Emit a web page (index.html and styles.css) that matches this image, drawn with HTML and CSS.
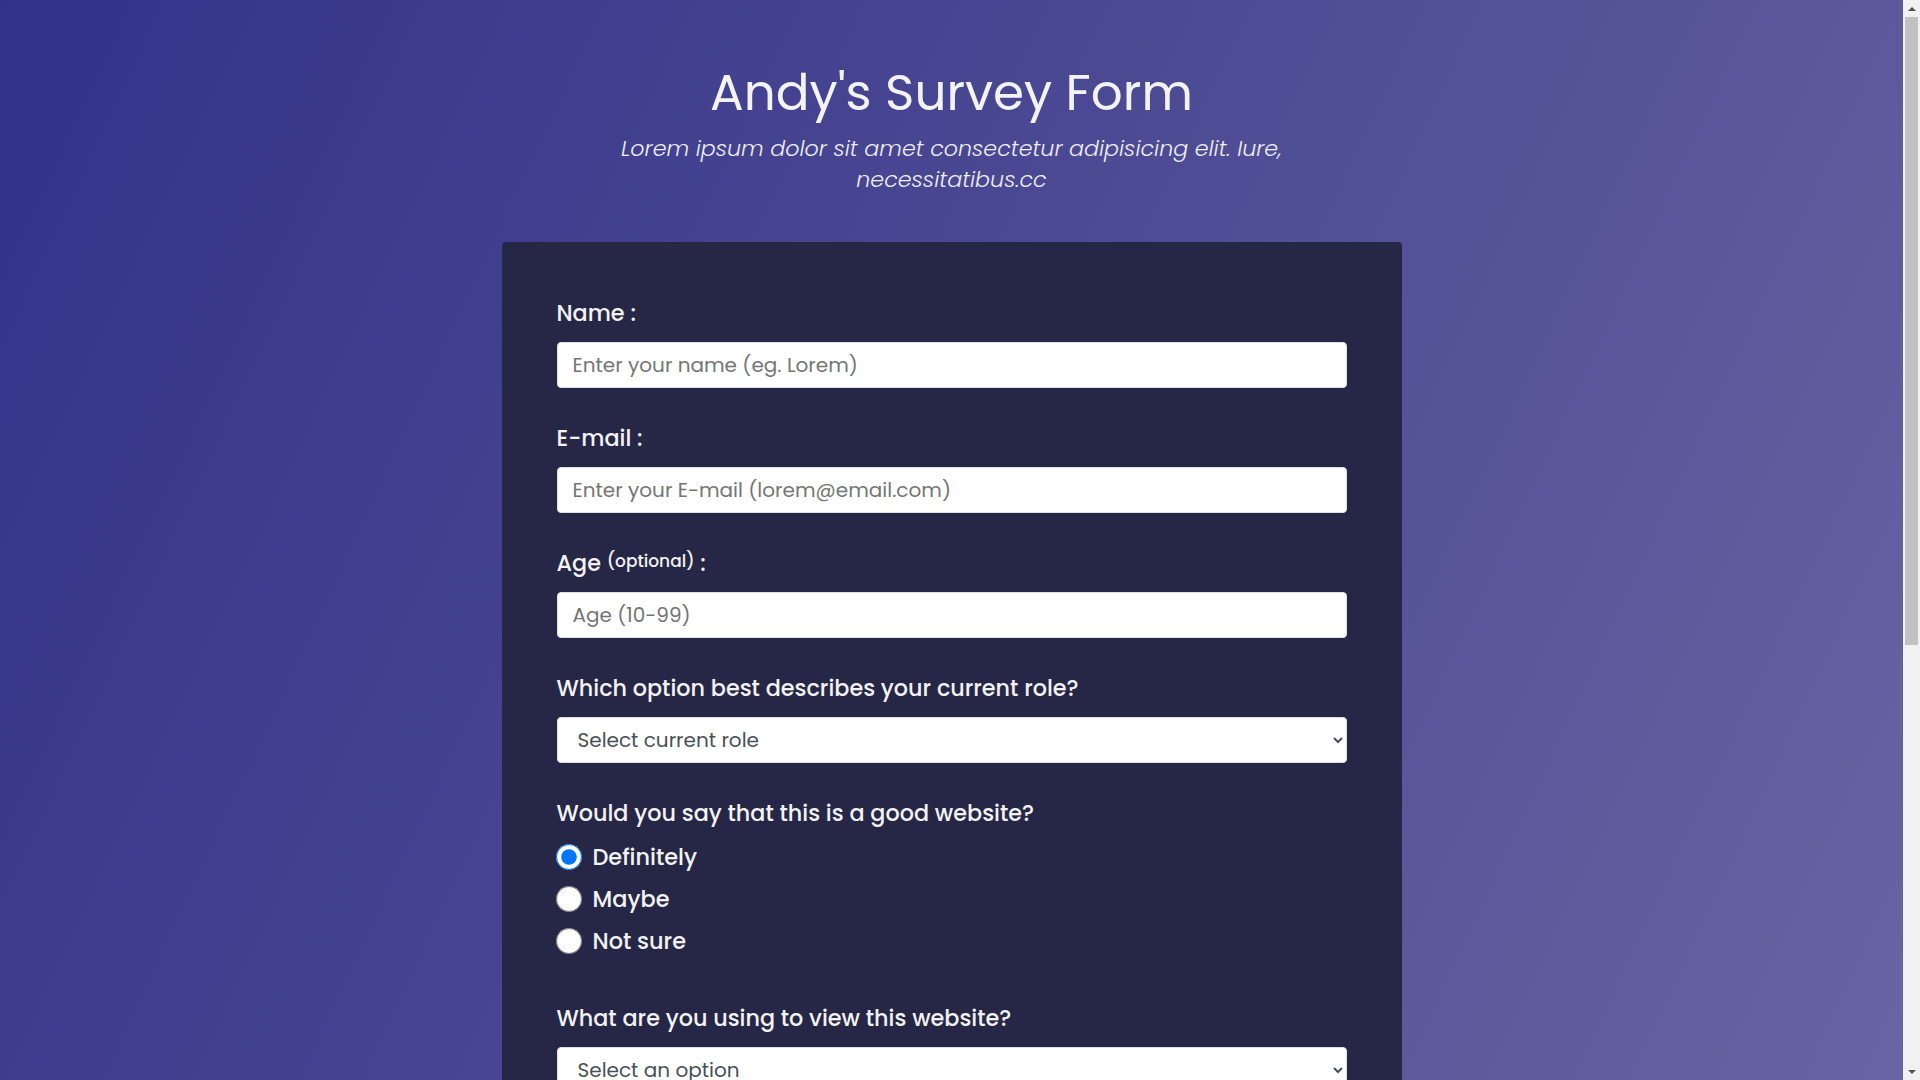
FILE: index.html
```html
<!DOCTYPE html>
<html lang="en">
<head>
<meta charset="UTF-8">
<title>Andy's Survey Form</title>
<link rel="stylesheet" href="styles.css">
</head>
<body>
<header class="header">
  <h1 class="title" id="title">Andy's Survey Form</h1>
  <p class="description" id="description">Lorem ipsum dolor sit amet consectetur adipisicing elit. Iure, necessitatibus.cc</p>
</header>
<main class="card">
  <form id="survey-form" class="form">
    <div class="group">
      <label class="label" for="name">Name :</label>
      <input class="field" id="name" type="text" placeholder="Enter your name (eg. Lorem)">
    </div>
    <div class="group">
      <label class="label" for="email">E-mail :</label>
      <input class="field" id="email" type="email" placeholder="Enter your E-mail (lorem@email.com)">
    </div>
    <div class="group">
      <label class="label" for="number">Age <span class="small">(optional)</span> :</label>
      <input class="field" id="number" type="number" placeholder="Age (10-99)">
    </div>
    <div class="group">
      <label class="label" for="role">Which option best describes your current role?</label>
      <select class="field select" id="role">
        <option>Select current role</option>
        <option>Student</option>
        <option>Full Time Job</option>
        <option>Prefer not to say</option>
      </select>
    </div>
    <div class="group group-radio">
      <p class="label">Would you say that this is a good website?</p>
      <label class="choice"><input class="radio" type="radio" name="good" checked> Definitely</label>
      <label class="choice"><input class="radio" type="radio" name="good"> Maybe</label>
      <label class="choice"><input class="radio" type="radio" name="good"> Not sure</label>
    </div>
    <div class="group">
      <label class="label" for="device">What are you using to view this website?</label>
      <select class="field select" id="device">
        <option>Select an option</option>
        <option>Desktop</option>
        <option>Laptop</option>
        <option>Phone</option>
      </select>
    </div>
    <div class="group group-radio">
      <p class="label">What would you like to see improved? <span class="small">(Check all that apply)</span></p>
      <label class="choice"><input class="check" type="checkbox"> Front-end Projects</label>
      <label class="choice"><input class="check" type="checkbox"> Back-end Projects</label>
      <label class="choice"><input class="check" type="checkbox"> Data Visualization</label>
      <label class="choice"><input class="check" type="checkbox"> Challenges</label>
      <label class="choice"><input class="check" type="checkbox"> Open Source Community</label>
    </div>
    <div class="group">
      <label class="label" for="comments">Any comments or suggestions?</label>
      <textarea class="field textarea" id="comments" placeholder="Enter your comment here..."></textarea>
    </div>
    <button class="submit" id="submit" type="submit">Submit</button>
  </form>
</main>
<div class="scrollbar" aria-hidden="true">
  <span class="scroll-arrow scroll-up"></span>
  <span class="scroll-track"><span class="scroll-thumb"></span></span>
  <span class="scroll-arrow scroll-down"></span>
</div>
</body>
</html>
```
FILE: styles.css
```css
html {
  min-height: 100%;
  background: linear-gradient(115deg, #32328a 0%, #4a4892 45%, #6765a2 100%) fixed;
}

body {
  margin: 0 17px 0 0;
  font-family: "Poppins", "Open Sans", "DejaVu Sans", sans-serif;
  color: #f3f3f3;
}

.scrollbar {
  position: fixed;
  top: 0;
  right: 0;
  width: 17px;
  height: 100vh;
  display: flex;
  flex-direction: column;
  background: #f1f1f1;
}

.scroll-arrow {
  flex: none;
  height: 17px;
  display: flex;
  align-items: center;
  justify-content: center;
}

.scroll-up::before,
.scroll-down::before {
  content: "";
  width: 0;
  height: 0;
  border-left: 4px solid transparent;
  border-right: 4px solid transparent;
}

.scroll-up::before {
  border-bottom: 4px solid #505050;
}

.scroll-down::before {
  border-top: 4px solid #505050;
}

.scroll-track {
  flex: 1;
  padding: 0 2px;
}

.scroll-thumb {
  display: block;
  height: 628px;
  background: #c1c1c1;
}

.header {
  text-align: center;
  padding-top: 62px;
  padding-bottom: 47px;
}

.title {
  margin: 0 0 9px;
  font-size: 50px;
  font-weight: 400;
  line-height: 62px;
  color: #f3f3f3;
}

.description {
  margin: 0 auto;
  max-width: 720px;
  font-size: 22.2px;
  line-height: 31px;
  font-style: italic;
  font-weight: 300;
  color: #eeeef4;
}

.card {
  width: 900px;
  box-sizing: border-box;
  margin: 0 auto 60px;
  padding: 55px 55px 54px;
  background: #262646;
  border-radius: 4px;
}

.form {
  display: flex;
  flex-direction: column;
}

.group {
  display: flex;
  flex-direction: column;
  margin-bottom: 34px;
}

.group-radio {
  margin-bottom: 40px;
}

.label {
  display: block;
  margin: 0 0 12px;
  font-size: 22.3px;
  line-height: 33px;
  font-weight: 500;
  color: #f3f3f3;
}

.small {
  font-size: 17px;
  vertical-align: 4px;
  line-height: 0;
}

.field {
  box-sizing: border-box;
  width: 100%;
  height: 46px;
  margin: 0;
  padding: 0 15px;
  border: 1px solid #dfe1e5;
  border-radius: 4px;
  background: #ffffff;
  font-family: inherit;
  font-size: 20px;
  color: #495057;
}

.field::placeholder {
  color: #757575;
}

.select {
  padding: 0 16px 0 16px;
  color: #495057;
}

.textarea {
  height: 120px;
  padding: 10px 15px;
  resize: vertical;
}

.choice {
  display: flex;
  align-items: center;
  height: 42px;
  font-size: 22.4px;
  font-weight: 500;
  color: #f3f3f3;
}

.choice:first-of-type {
  margin-top: -6px;
}

.radio,
.check {
  width: 26px;
  height: 26px;
  margin: 0 11px 0 -1px;
  flex: none;
}

.submit {
  display: block;
  width: 100%;
  height: 52px;
  border: none;
  border-radius: 4px;
  background: #37af65;
  color: #f3f3f3;
  font-family: inherit;
  font-size: 22px;
}
```
